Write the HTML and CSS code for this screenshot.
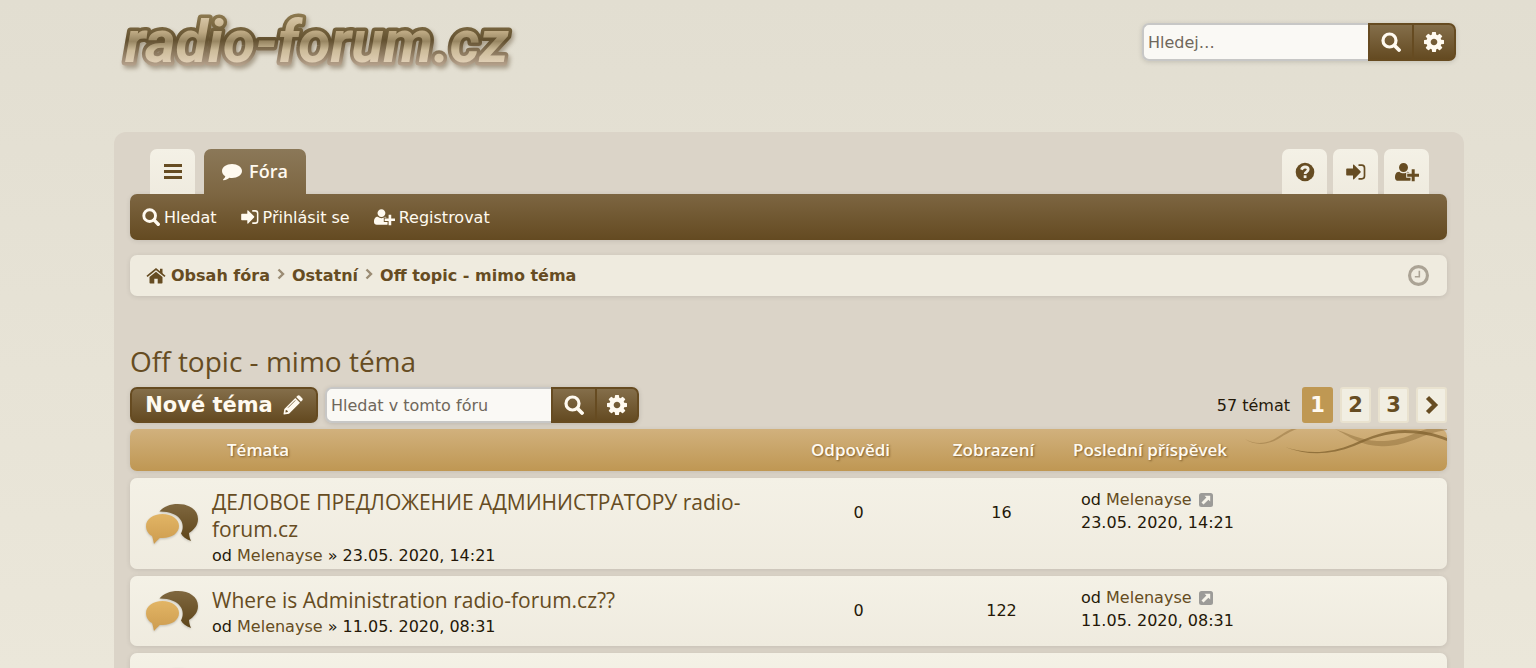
FILE: index.html
```html
<!DOCTYPE html>
<html lang="cs">
<head>
  <meta charset="UTF-8">
  <meta name="viewport" content="width=device-width, initial-scale=1.0">
  <title>Off topic - mimo téma - radio-forum.cz</title>
  <link rel="stylesheet" href="styles.css">
</head>
<body>

  <svg class="sprite" width="0" height="0" aria-hidden="true">
    <defs>
      <linearGradient id="gold" x1="0" y1="0" x2="0" y2="1">
        <stop offset="0" stop-color="#e2b565"/><stop offset="1" stop-color="#cd9c4f"/>
      </linearGradient>
      <linearGradient id="brown" x1="0" y1="0" x2="0" y2="1">
        <stop offset="0" stop-color="#7f673f"/><stop offset="1" stop-color="#5e4519"/>
      </linearGradient>
    </defs>
    <symbol id="i-search" viewBox="0 0 20 20">
      <circle cx="8.500" cy="8.500" r="6.500" fill="none" stroke="currentColor" stroke-width="3.200"/>
      <path d="M13.500 13.500L18 18" stroke="currentColor" stroke-width="3.800" stroke-linecap="round"/>
    </symbol>
    <symbol id="i-cog" viewBox="0 0 1536 1536">
      <path fill="currentColor" d="M1024 768q0-106-75-181t-181-75-181 75-75 181 75 181 181 75 181-75 75-181zm512-109v222q0 12-8 23t-20 13l-185 28q-19 54-39 91 35 50 107 138 10 12 10 25t-9 23q-27 37-99 108t-94 71q-12 0-26-9l-138-108q-44 23-91 38-16 136-29 186-7 28-36 28h-222q-14 0-24.500-8.500t-11.500-21.500l-28-184q-49-16-90-37l-141 107q-10 9-25 9-14 0-25-11-126-114-165-168-7-10-7-23 0-12 8-23 15-21 51-66.500t54-70.500q-27-50-41-99l-183-27q-13-2-21-12.500t-8-23.500v-222q0-12 8-23t19-13l186-28q14-46 39-92-40-57-107-138-10-12-10-24 0-10 9-23 26-36 98.500-107.500t94.500-71.500q13 0 26 10l138 107q44-23 91-38 16-136 29-186 7-28 36-28h222q14 0 24.500 8.500t11.500 21.500l28 184q49 16 90 37l142-107q9-9 24-9 13 0 25 10 129 119 165 170 7 8 7 22 0 12-8 23-15 21-51 66.500t-54 70.500q26 50 41 98l183 28q13 2 21 12.500t8 23.500z"/>
    </symbol>
    <symbol id="i-bars" viewBox="0 0 18 18">
      <path d="M0 2.500h18M0 8.500h18M0 14.500h18" stroke="currentColor" stroke-width="3"/>
    </symbol>
    <symbol id="i-comment" viewBox="0 0 20 18">
      <path fill="currentColor" d="M10 1c5.500 0 10 3 10 7s-4.500 7-10 7c-.9 0-1.800-.1-2.600-.2C5.600 16.400 3.600 17 1.600 17.200c-.6 0-.7-.6-.3-1 1-.9 1.700-1.600 2-3C1.300 12 0 10.100 0 8c0-4 4.500-7 10-7z"/>
    </symbol>
    <symbol id="i-help" viewBox="0 0 20 20">
      <circle cx="10" cy="10" r="9.300" fill="currentColor"/>
      <path d="M6.500 7.700C7.200 5.600 8.500 5 10 5c1.800 0 3.200 1 3.200 2.600 0 2.300-3.100 2.200-3.100 4.400" fill="none" stroke="#f3f0e4" stroke-width="2.800"/>
      <path d="M8.700 13.300h2.800v2.800H8.700z" fill="#f3f0e4"/>
    </symbol>
    <symbol id="i-login" viewBox="0 0 20 18">
      <path fill="currentColor" d="M1 5.500h6V2.200c0-.7.500-.9 1-.4l6.500 6.500c.4.400.4.900 0 1.300L8 16.200c-.5.500-1 .3-1-.4v-3.300H1c-.5 0-.8-.3-.8-.8V6.300c0-.5.300-.8.800-.8z"/>
      <path d="M12.500 2.200h3.300c1.600 0 2.700 1.100 2.700 2.700v8.200c0 1.600-1.100 2.700-2.700 2.700h-3.300" fill="none" stroke="currentColor" stroke-width="1.700"/>
    </symbol>
    <symbol id="i-register" viewBox="0 0 24 20">
      <path fill="currentColor" d="M8.500 1C11 1 13 3 13 5.500S11 10 8.500 10 4 8 4 5.500 6 1 8.500 1z"/>
      <path fill="currentColor" d="M4.300 9.700c1.200 1 2.600 1.600 4.200 1.600s2.800-.5 4-1.500c.9.100 1.500.4 2 .8h-3.300v5.200h4.300v2.800c-.4.200-.8.200-1.300.2H3.200C1.300 18.800 0 17.700 0 15.700c0-3 .8-6 4.300-6z"/>
      <path d="M18.200 7.300v12M12.200 13.200h11.800" stroke="currentColor" stroke-width="3"/>
    </symbol>
    <symbol id="i-home" viewBox="0 0 20 18">
      <path fill="currentColor" d="M3.500 10L10 4.700l6.500 5.300v5.800c0 .5-.3.800-.8.800h-4v-4.800H8.300v4.800h-4c-.5 0-.8-.3-.8-.8z"/>
      <path d="M1 9.300L10 2l9 7.300" fill="none" stroke="currentColor" stroke-width="1.700"/>
      <path fill="currentColor" d="M14 1.700h2.500v6L14 5.600z"/>
    </symbol>
    <symbol id="i-clock" viewBox="0 0 20 20">
      <circle cx="10" cy="10" r="8.500" fill="none" stroke="currentColor" stroke-width="3"/>
      <path d="M10.800 5.500v5.700H6.500" fill="none" stroke="currentColor" stroke-width="1.500"/>
    </symbol>
    <symbol id="i-sep" viewBox="0 0 8 12">
      <path d="M1.500 1.500L6 6l-4.500 4.500" fill="none" stroke="currentColor" stroke-width="2.400"/>
    </symbol>
    <symbol id="i-pencil" viewBox="0 0 20 20">
      <path fill="currentColor" fill-rule="evenodd" d="M12.300 3L17 7.700 6 18.700l-5 .8c-.4 0-.6-.2-.5-.5L1.300 14zM2.800 15l-.4 2.400 2.400-.4v-1.200H3.800V15z"/>
      <path fill="currentColor" d="M13.200 2.100l1.300-1.300c.7-.7 1.600-.7 2.300 0l2.400 2.400c.7.700.7 1.600 0 2.300l-1.300 1.300z"/>
      <path d="M5 12.700l7.300-7.300" stroke="#6f5730" stroke-width=".8"/>
    </symbol>
    <symbol id="i-next" viewBox="0 0 14 20">
      <path d="M2.500 2.500L10 10l-7.500 7.500" fill="none" stroke="currentColor" stroke-width="4.400"/>
    </symbol>
    <symbol id="i-last" viewBox="0 0 14 14">
      <rect width="14" height="14" rx="2.500" fill="#9c9b98"/>
      <path d="M5.500 2.800h5.700v5.700L9.400 6.700 4.500 11.500 2.500 9.500l4.900-4.900z" fill="#f7f4ea"/>
    </symbol>
    <symbol id="i-topic" viewBox="0 0 54 42">
      <path fill="url(#brown)" d="M14.500 8.500C18.500 3.500 25 1 33 1c11.500 0 20 6 20 15 0 6-3.500 10.500-9 14 .3 3 .8 5.500 2 8-5-1.500-8.500-4.500-10-7.500 5-9 0-22-21.500-22z"/>
      <path fill="url(#gold)" d="M17.500 11c9.500 0 16.500 5 16.500 12s-7 12-16.500 12h-2.700c-2 2-3.500 3.500-5.800 6-.7-3-1-5-2-8-4-2-6-6-6-10 0-7 7-12 16.500-12z"/>
    </symbol>
  </svg>

  <header class="site-header">
    <a href="#" class="site-logo" aria-label="radio-forum.cz">
      <svg width="410" height="84" viewBox="0 0 410 84">
        <defs>
          <linearGradient id="logoFill" gradientUnits="userSpaceOnUse" x1="0" y1="16" x2="0" y2="62">
            <stop offset="0" stop-color="#d9c8a8"/><stop offset=".35" stop-color="#bda983"/>
            <stop offset=".55" stop-color="#978561"/><stop offset=".75" stop-color="#cdbc9a"/>
            <stop offset="1" stop-color="#dfceb4"/>
          </linearGradient>
          <linearGradient id="logoEdge" gradientUnits="userSpaceOnUse" x1="0" y1="14" x2="0" y2="66">
            <stop offset="0" stop-color="#8d7a50"/><stop offset=".5" stop-color="#62502f"/>
            <stop offset="1" stop-color="#b7a38e"/>
          </linearGradient>
        </defs>
        <text class="logo-edge" x="7" y="62">radio-forum.cz</text>
        <text class="logo-face" x="7" y="62">radio-forum.cz</text>
      </svg>
    </a>
    <form class="search-box">
      <input type="search" class="inputbox" placeholder="Hledej…" aria-label="Hledej">
      <button type="button" class="button" aria-label="Hledat"><svg class="icon"><use href="#i-search"/></svg></button>
      <button type="button" class="button" aria-label="Pokročilé hledání"><svg class="icon"><use href="#i-cog"/></svg></button>
    </form>
  </header>

  <main class="wrap">
    <nav class="tabs">
      <a href="#" class="tab" aria-label="Menu"><svg class="icon-small"><use href="#i-bars"/></svg></a>
      <a href="#" class="tab active"><svg class="icon"><use href="#i-comment"/></svg>Fóra</a>
      <a href="#" class="tab tab-right" aria-label="FAQ"><svg class="icon"><use href="#i-help"/></svg></a>
      <a href="#" class="tab" aria-label="Přihlásit se"><svg class="icon"><use href="#i-login"/></svg></a>
      <a href="#" class="tab" aria-label="Registrovat"><svg class="icon-wide"><use href="#i-register"/></svg></a>
    </nav>
    <nav class="subnav">
      <a href="#"><svg class="icon-small"><use href="#i-search"/></svg>Hledat</a>
      <a href="#"><svg class="icon-small"><use href="#i-login"/></svg>Přihlásit se</a>
      <a href="#"><svg class="icon-wide"><use href="#i-register"/></svg>Registrovat</a>
    </nav>

    <nav class="breadcrumbs">
      <a href="#"><svg class="icon"><use href="#i-home"/></svg>Obsah fóra</a>
      <svg class="sep"><use href="#i-sep"/></svg>
      <a href="#">Ostatní</a>
      <svg class="sep"><use href="#i-sep"/></svg>
      <a href="#">Off topic - mimo téma</a>
      <svg class="clock"><use href="#i-clock"/></svg>
    </nav>

    <h2><a href="#">Off topic - mimo téma</a></h2>

    <div class="action-bar">
      <button type="button" class="button new-topic">Nové téma<svg class="icon"><use href="#i-pencil"/></svg></button>
      <form class="search-box">
        <input type="search" class="inputbox" placeholder="Hledat v tomto fóru" aria-label="Hledat v tomto fóru">
        <button type="button" class="button" aria-label="Hledat"><svg class="icon"><use href="#i-search"/></svg></button>
        <button type="button" class="button" aria-label="Pokročilé hledání"><svg class="icon"><use href="#i-cog"/></svg></button>
      </form>
      <div class="pagination">
        <span class="total">57 témat</span>
        <span class="page current">1</span>
        <a href="#" class="page">2</a>
        <a href="#" class="page">3</a>
        <a href="#" class="page" aria-label="Další"><svg class="icon-next"><use href="#i-next"/></svg></a>
      </div>
    </div>

    <table class="topics">
      <thead>
        <tr>
          <th class="head-topic">Témata</th>
          <th>Odpovědi</th>
          <th>Zobrazení</th>
          <th class="head-last">Poslední příspěvek
            <svg class="waves" viewBox="0 0 204 42" aria-hidden="true">
              <path d="M2 10c10 6 22 5 31-1C41 4 45 1 49 0h5c-6 2-11 5-19 10-10 6-23 7-33 0z" fill="#9c7c48" opacity=".6"/>
              <path d="M92 0c14 5 26 11 42 12 24 1 36-8 50-12h20v1c-26 3-40 18-68 16-20-1-30-10-44-17z" fill="#8f6f3c" opacity=".5"/>
              <path d="M42 18c24 8 46 6 68-3 18-8 34-14 52-14 16 0 30 3 42 8v3c-12-5-26-8-42-8-18 0-33 5-51 13-24 9-46 10-69 1z" fill="#80622f" opacity=".75"/>
            </svg>
          </th>
        </tr>
      </thead>
      <tbody>
        <tr>
          <td class="topic-icon"><svg><use href="#i-topic"/></svg></td>
          <td class="topic"><a href="#" class="topic-title">ДЕЛОВОЕ ПРЕДЛОЖЕНИЕ АДМИНИСТРАТОРУ radio-forum.cz</a>
            <p>od <a href="#">Melenayse</a> » 23.05. 2020, 14:21</p></td>
          <td class="count">0</td>
          <td class="count">16</td>
          <td class="last">od <a href="#">Melenayse</a> <a href="#" aria-label="Poslední příspěvek"><svg><use href="#i-last"/></svg></a><br>23.05. 2020, 14:21</td>
        </tr>
        <tr>
          <td class="topic-icon"><svg><use href="#i-topic"/></svg></td>
          <td class="topic"><a href="#" class="topic-title">Where is Administration radio-forum.cz??</a>
            <p>od <a href="#">Melenayse</a> » 11.05. 2020, 08:31</p></td>
          <td class="count">0</td>
          <td class="count">122</td>
          <td class="last">od <a href="#">Melenayse</a> <a href="#" aria-label="Poslední příspěvek"><svg><use href="#i-last"/></svg></a><br>11.05. 2020, 08:31</td>
        </tr>
        <tr>
          <td class="topic-icon"><svg><use href="#i-topic"/></svg></td>
          <td class="topic"><a href="#" class="topic-title">Prohlížeč Firefox</a></td>
          <td class="count"></td>
          <td class="count"></td>
          <td class="last">od <a href="#">Rumcajs</a></td>
        </tr>
      </tbody>
    </table>
  </main>

</body>
</html>
```
FILE: styles.css
```css
* {
  box-sizing: border-box;
}

html {
  overflow: hidden;
}

body {
  margin: 0;
  height: 100vh;
  overflow: hidden;
  font-family: "DejaVu Sans", sans-serif;
  font-size: 16px;
  line-height: 23px;
  color: #241808;
  background: linear-gradient(to bottom, #e2ded1, #ebe7da);
}

a {
  color: #664c22;
  text-decoration: none;
}

svg {
  flex: none;
}

.sprite {
  position: absolute;
}

.icon {
  width: 20px;
  height: 20px;
}

.icon-small {
  width: 18px;
  height: 18px;
}

.icon-wide {
  width: 24px;
  height: 20px;
}

.icon-next {
  width: 14px;
  height: 20px;
}

/* header */
.site-header {
  display: flex;
  justify-content: space-between;
  align-items: flex-start;
  height: 132px;
  margin: 0 80px 0 118px;
}

.site-logo svg {
  display: block;
  filter: drop-shadow(2px 3px 2px rgba(80, 60, 30, 0.4));
}

.site-logo text {
  font-family: Roboto, sans-serif;
  font-size: 59px;
  font-weight: bold;
  font-style: italic;
}

.logo-edge {
  fill: none;
  stroke: url(#logoEdge);
  stroke-width: 7px;
  stroke-linejoin: round;
}

.logo-face {
  fill: url(#logoFill);
}

.search-box {
  display: flex;
  border-radius: 7px;
  box-shadow: 0 1px 5px rgba(0, 0, 0, 0.15);
}

.site-header .search-box {
  margin-top: 23px;
}

.inputbox {
  width: 226px;
  height: 38px;
  padding: 0 4px;
  font: inherit;
  color: #5c5141;
  background: #faf9f5;
  border: 2px solid #c7c7c6;
  border-right: 0;
  border-radius: 7px 0 0 7px;
}

.inputbox::placeholder {
  color: #6f675b;
}

.button {
  display: flex;
  align-items: center;
  justify-content: center;
  width: 44px;
  padding: 0;
  font: inherit;
  color: #fffaf0;
  background: linear-gradient(to bottom, #846e4a, #644a21);
  border: 2px solid #664b21;
  border-right-width: 0;
}

.search-box .button:last-child {
  border-right-width: 2px;
  border-radius: 0 7px 7px 0;
}

/* page body */
.wrap {
  margin: 0 72px 0 114px;
  padding: 17px 17px 16px 16px;
  min-height: calc(100vh - 132px);
  background: #dbd4c8;
  border-radius: 12px 12px 0 0;
}

.tabs {
  display: flex;
  gap: 6px;
  padding: 0 18px 0 20px;
}

.tab {
  display: flex;
  align-items: center;
  justify-content: center;
  width: 45px;
  height: 45px;
  background: linear-gradient(to bottom, #f4f1e6, #efebdf);
  border-radius: 7px 7px 0 0;
}

.tab.active {
  gap: 7px;
  width: 102px;
  margin-left: 3px;
  font-family: "Open Sans", sans-serif;
  font-size: 18px;
  font-weight: 600;
  color: #fffaf0;
  background: linear-gradient(to bottom, #8b7858, #7d6642);
}

.tab-right {
  margin-left: auto;
}

.subnav {
  display: flex;
  align-items: center;
  gap: 24px;
  height: 46px;
  padding: 0 12px;
  background: linear-gradient(to bottom, #7d6642, #644a21);
  border-radius: 7px;
  box-shadow: 0 1px 5px rgba(0, 0, 0, 0.1);
}

.subnav a {
  display: flex;
  align-items: center;
  gap: 4px;
  color: #fffaf0;
}

.subnav .icon-wide {
  width: 21px;
  height: 18px;
}

.breadcrumbs {
  display: flex;
  align-items: center;
  gap: 7px;
  height: 41px;
  margin-top: 15px;
  padding: 0 18px 0 16px;
  font-weight: bold;
  background: #efebdf;
  border-radius: 7px;
  box-shadow: 0 1px 5px rgba(0, 0, 0, 0.1);
}

.breadcrumbs a {
  display: flex;
  align-items: center;
  gap: 5px;
}

.sep {
  width: 8px;
  height: 12px;
  margin-bottom: 4px;
  color: #9b8c74;
}

.clock {
  width: 21px;
  height: 21px;
  margin-left: auto;
  color: #aba395;
}

h2 {
  margin: 47px 0 8px;
  font-family: "Open Sans", sans-serif;
  font-size: 28px;
  font-weight: normal;
  line-height: 36px;
}

.action-bar {
  display: flex;
  align-items: center;
  height: 36px;
}

.action-bar .inputbox,
.action-bar .button {
  height: 36px;
}

.action-bar .new-topic {
  gap: 10px;
  width: 188px;
  margin-right: 7px;
  font-size: 21px;
  font-weight: bold;
  border-right-width: 2px;
  border-radius: 7px;
  box-shadow: 0 1px 5px rgba(0, 0, 0, 0.1);
}

.pagination {
  display: flex;
  align-items: center;
  gap: 7px;
  margin-left: auto;
}

.total {
  margin-right: 5px;
}

.page {
  display: flex;
  align-items: center;
  justify-content: center;
  width: 31px;
  height: 36px;
  font-size: 21px;
  font-weight: bold;
  background: #f1eee2;
  border: 2px solid #e9e2cf;
  border-radius: 3px;
}

.page.current {
  color: #fffaf0;
  background: #bf9853;
  border-color: #bf9853;
}

/* topic list */
.topics,
.topics thead,
.topics tbody {
  display: block;
}

.topics tr {
  display: grid;
  grid-template-columns: 82px 1fr 143px 143px 374px;
  min-height: 70px;
  margin-top: 7px;
  background: linear-gradient(to bottom, #f4f1e6, #efebdf);
  border-radius: 7px;
  box-shadow: 0 1px 5px rgba(0, 0, 0, 0.1);
}

.topics thead tr {
  height: 42px;
  min-height: 0;
  margin-top: 6px;
  background: linear-gradient(to bottom, #d1b17d, #bf9753);
}

.topics th {
  padding: 0 16px 0 0;
  font-family: "Open Sans", sans-serif;
  font-size: 17px;
  font-weight: 600;
  line-height: 42px;
  color: #fffaf0;
  text-shadow: 1px 1px 2px rgba(80, 50, 10, 0.6);
}

.topics .head-topic {
  grid-column: span 2;
  padding-left: 97px;
  text-align: left;
}

.topics .head-last {
  position: relative;
  padding: 0;
  text-align: left;
}

/* decoration over the right end of the bar */
.waves {
  position: absolute;
  top: 0;
  right: 0;
  width: 204px;
  height: 42px;
}

.topics td {
  padding: 0;
}

.topic-icon svg {
  width: 54px;
  height: 42px;
  filter: drop-shadow(0 1px 1px rgba(0, 0, 0, 0.2));
}

.topics .topic-icon {
  display: flex;
  align-items: center;
  padding-left: 15px;
}

.topics .topic {
  padding: 11px 20px 2px 0;
}

.topic-title {
  display: block;
  font-family: "Open Sans", sans-serif;
  font-size: 21px;
  line-height: 27px;
}

.topic p {
  margin: 1px 0 0;
}

.topics .count {
  padding-top: 23px;
  text-align: center;
}

.topics .last {
  padding: 10px 0 0 8px;
}

.last svg {
  width: 14px;
  height: 14px;
  margin-left: 2px;
  vertical-align: -2px;
}
```
